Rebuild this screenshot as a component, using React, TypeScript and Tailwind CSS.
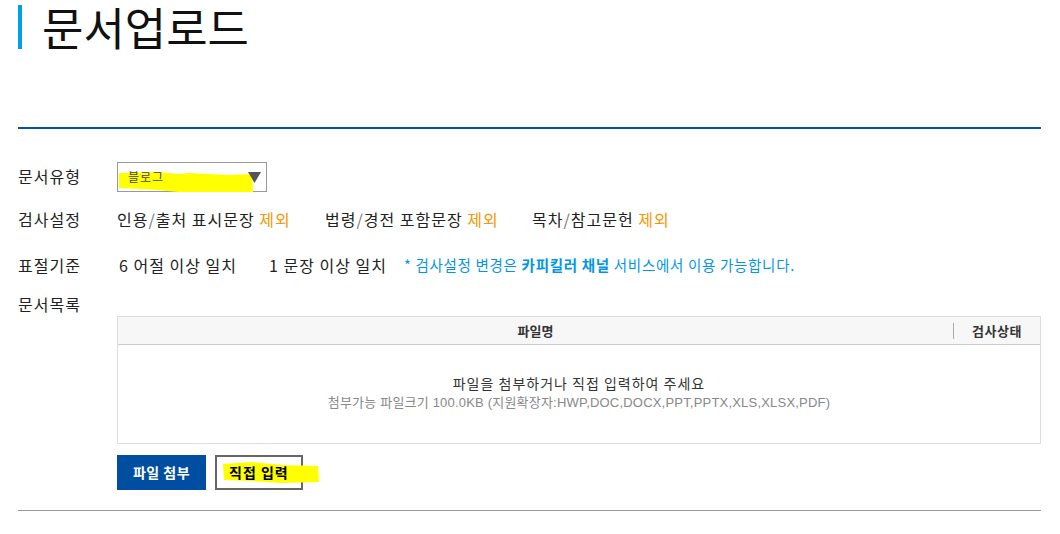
import React from "react";

const font = { fontFamily: '"Noto Sans CJK KR", "Liberation Sans", sans-serif' };

export default function App() {
  return (
    <div
      className="w-[1060px] h-[534px] bg-white text-[#222] overflow-hidden"
      style={font}
    >
      <div className="ml-[18px] w-[1023px]">
        {/* Title */}
        <div className="flex items-start">
          <div className="mt-[5px] w-[4px] h-[44px] bg-[#00a0e9]" />
          <div className="ml-[20px] text-[45px] leading-[54px] text-[#111]">
            문서업로드
          </div>
        </div>

        <div className="mt-[73px] h-[2px] bg-[#0a4e9e]" />

        {/* Row 1 */}
        <div className="mt-[33px] flex items-center h-[30px]">
          <div className="w-[99px] text-[16px] tracking-[1px] pb-[2px]">문서유형</div>
          <div className="relative w-[150px] h-[30px] border border-[#999] bg-white">
            <svg
              className="absolute left-0 top-[8px]"
              width="136"
              height="22"
              viewBox="0 0 136 22"
            >
              <path
                d="M1 2 L40 1 L62 3 L70 2 L110 4 L134 3 L135 21 L60 21 L40 19 L1 17 Z"
                fill="#ffff00"
              />
            </svg>
            <span className="absolute left-[10px] top-[6px] text-[12px] tracking-[1px] leading-[16px] text-[#444]">
              블로그
            </span>
            <svg
              className="absolute left-[130px] top-[9px]"
              width="13"
              height="11"
              viewBox="0 0 13 11"
            >
              <path d="M0 0 H13 L6.5 11 Z" fill="#555" />
            </svg>
          </div>
        </div>

        {/* Row 2 */}
        <div className="mt-[17px] flex items-center h-[20px] text-[16px] tracking-[1px]">
          <div className="w-[99px]">검사설정</div>
          <div className="w-[208px]">
            인용<span className="text-[#777]">/</span>출처 표시문장{" "}
            <span className="text-[#f39800]">제외</span>
          </div>
          <div className="w-[207px]">
            법령<span className="text-[#777]">/</span>경전 포함문장{" "}
            <span className="text-[#f39800]">제외</span>
          </div>
          <div>
            목차<span className="text-[#777]">/</span>참고문헌{" "}
            <span className="text-[#f39800]">제외</span>
          </div>
        </div>

        {/* Row 3 */}
        <div className="mt-[26px] flex items-center h-[20px] text-[16px] tracking-[1px]">
          <div className="w-[101px]">표절기준</div>
          <div className="w-[150px]">6 어절 이상 일치</div>
          <div className="w-[135px]">1 문장 이상 일치</div>
          <div className="text-[14.5px] tracking-[0.7px] text-[#0096e6]">
            * 검사설정 변경은 <span className="font-bold">카피킬러 채널</span>{" "}
            서비스에서 이용 가능합니다.
          </div>
        </div>

        {/* Row 4 */}
        <div className="mt-[19px] flex items-center h-[20px] text-[16px] tracking-[1px]">
          <div>문서목록</div>
        </div>

        {/* Table */}
        <div className="mt-[2px] ml-[99px] border border-[#ddd]">
          <div className="flex items-center h-[28px] bg-[#f7f7f7] border-b border-[#ccc] text-[13px] font-bold text-[#333]">
            <div className="flex-1 text-center">파일명</div>
            <div className="w-px h-[16px] bg-[#aaa]" />
            <div className="w-[86px] text-center tracking-[0.5px]">검사상태</div>
          </div>
          <div className="h-[98px] flex flex-col items-center justify-center">
            <div className="text-[14px] tracking-[1px] text-[#333] leading-[20px] mt-[-2px]">
              파일을 첨부하거나 직접 입력하여 주세요
            </div>
            <div
              className="text-[13px] tracking-[0.2px] text-[#888] leading-[20px]"
              style={{ fontFamily: '"Liberation Sans", "Noto Sans CJK KR", sans-serif' }}
            >
              첨부가능 파일크기 100.0KB (지원확장자:HWP,DOC,DOCX,PPT,PPTX,XLS,XLSX,PDF)
            </div>
          </div>
        </div>

        {/* Buttons */}
        <div className="mt-[11px] ml-[99px] flex gap-[9px]">
          <div className="w-[89px] h-[35px] bg-[#004ea2] text-white text-[14px] tracking-[0.5px] font-bold flex items-center justify-center">
            파일 첨부
          </div>
          <div className="relative w-[88px] h-[35px] border-2 border-[#666] bg-white">
            <svg
              className="absolute left-[5px] top-[4px]"
              width="98"
              height="24"
              viewBox="0 0 98 24"
            >
              <path
                d="M1 3 L30 1 L60 4 L96 5 L97 21 L60 22 L30 20 L2 19 Z"
                fill="#ffff00"
              />
            </svg>
            <span className="absolute left-[12px] top-[6px] text-[14px] tracking-[1px] leading-[18px] font-bold text-black">
              직접 입력
            </span>
          </div>
        </div>

        <div className="mt-[20px] h-px bg-[#999]" />
      </div>
    </div>
  );
}
